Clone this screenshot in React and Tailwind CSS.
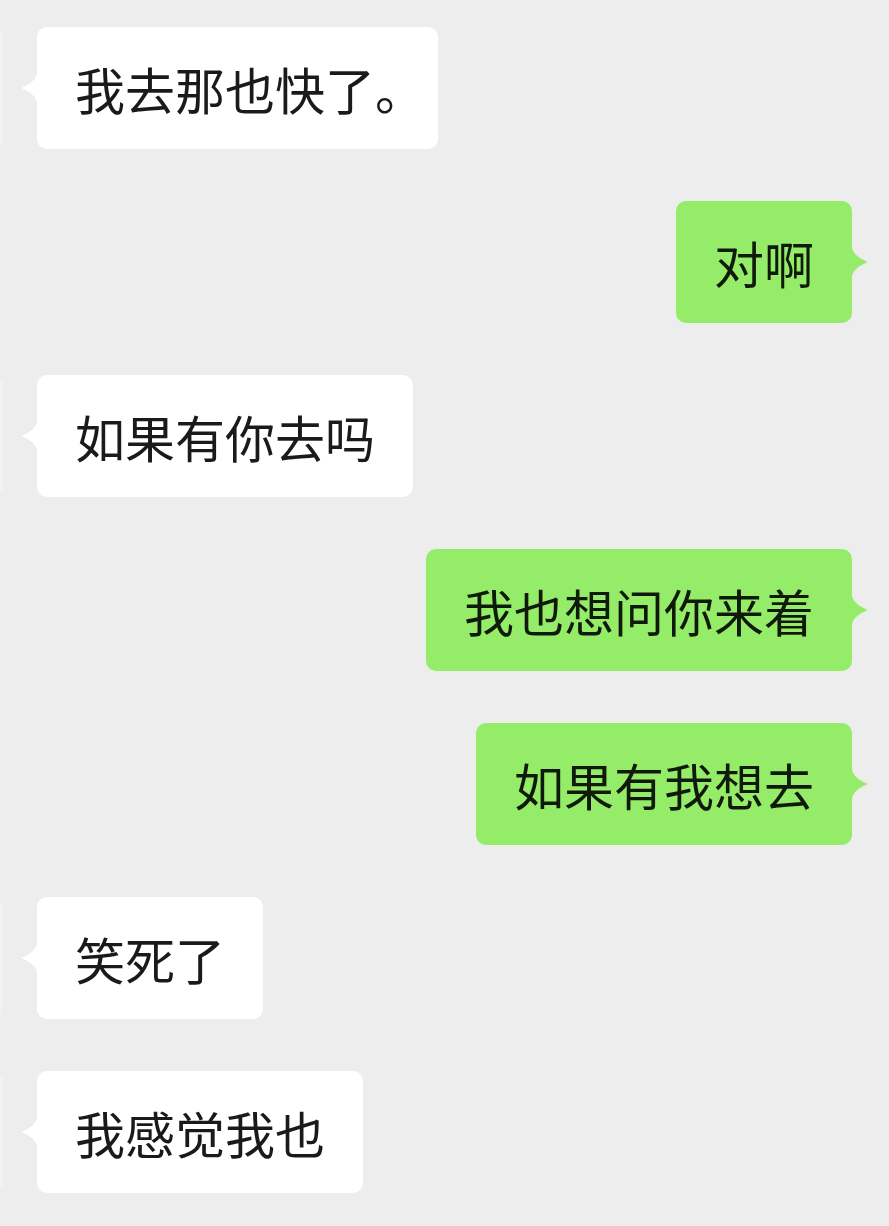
import React from "react";

const messages = [
  { side: "left", text: "我去那也快了", tail: "。" },
  { side: "right", text: "对啊" },
  { side: "left", text: "如果有你去吗" },
  { side: "right", text: "我也想问你来着" },
  { side: "right", text: "如果有我想去" },
  { side: "left", text: "笑死了" },
  { side: "left", text: "我感觉我也" },
];

function Tail({ side, color }) {
  const d = "M16 0 C14 7 8 10.5 1.6 13.2 Q0 14 1.6 14.8 C8 17.5 14 21 16 28 Z";
  return (
    <svg
      width="17"
      height="28"
      viewBox="0 0 17 28"
      className={
        side === "left"
          ? "absolute left-[-16px] top-1/2 -translate-y-1/2"
          : "absolute right-[-16px] top-1/2 -translate-y-1/2 -scale-x-100"
      }
    >
      <path d={d} fill={color} />
    </svg>
  );
}

function Bubble({ side, text, tail }) {
  const isLeft = side === "left";
  const color = isLeft ? "#ffffff" : "#95ec69";
  return (
    <div
      className={
        isLeft
          ? "relative flex h-[122px] items-center rounded-[10px] bg-white px-[38px] text-[#1a1a1a]"
          : "relative flex h-[122px] items-center rounded-[10px] bg-[#95ec69] px-[38px] text-[#0f1a0b]"
      }
    >
      <Tail side={side} color={color} />
      <span className="whitespace-nowrap text-[50px] leading-none">
        {text}
        {tail ? <span className="mr-[-25px]">{tail}</span> : null}
      </span>
    </div>
  );
}

export default function App() {
  return (
    <div
      className="flex min-h-[1226px] w-[889px] flex-col gap-[52px] bg-[#ededed] pt-[27px]"
      style={{ fontFamily: '"Noto Sans CJK SC", "Noto Sans", sans-serif' }}
    >
      {messages.map((m, i) =>
        m.side === "left" ? (
          <div key={i} className="flex items-center">
            <div className="h-[112px] w-[3px] bg-[#f1f1f1]" />
            <div className="ml-[34px]">
              <Bubble {...m} />
            </div>
          </div>
        ) : (
          <div key={i} className="flex justify-end pr-[37px]">
            <Bubble {...m} />
          </div>
        )
      )}
    </div>
  );
}
